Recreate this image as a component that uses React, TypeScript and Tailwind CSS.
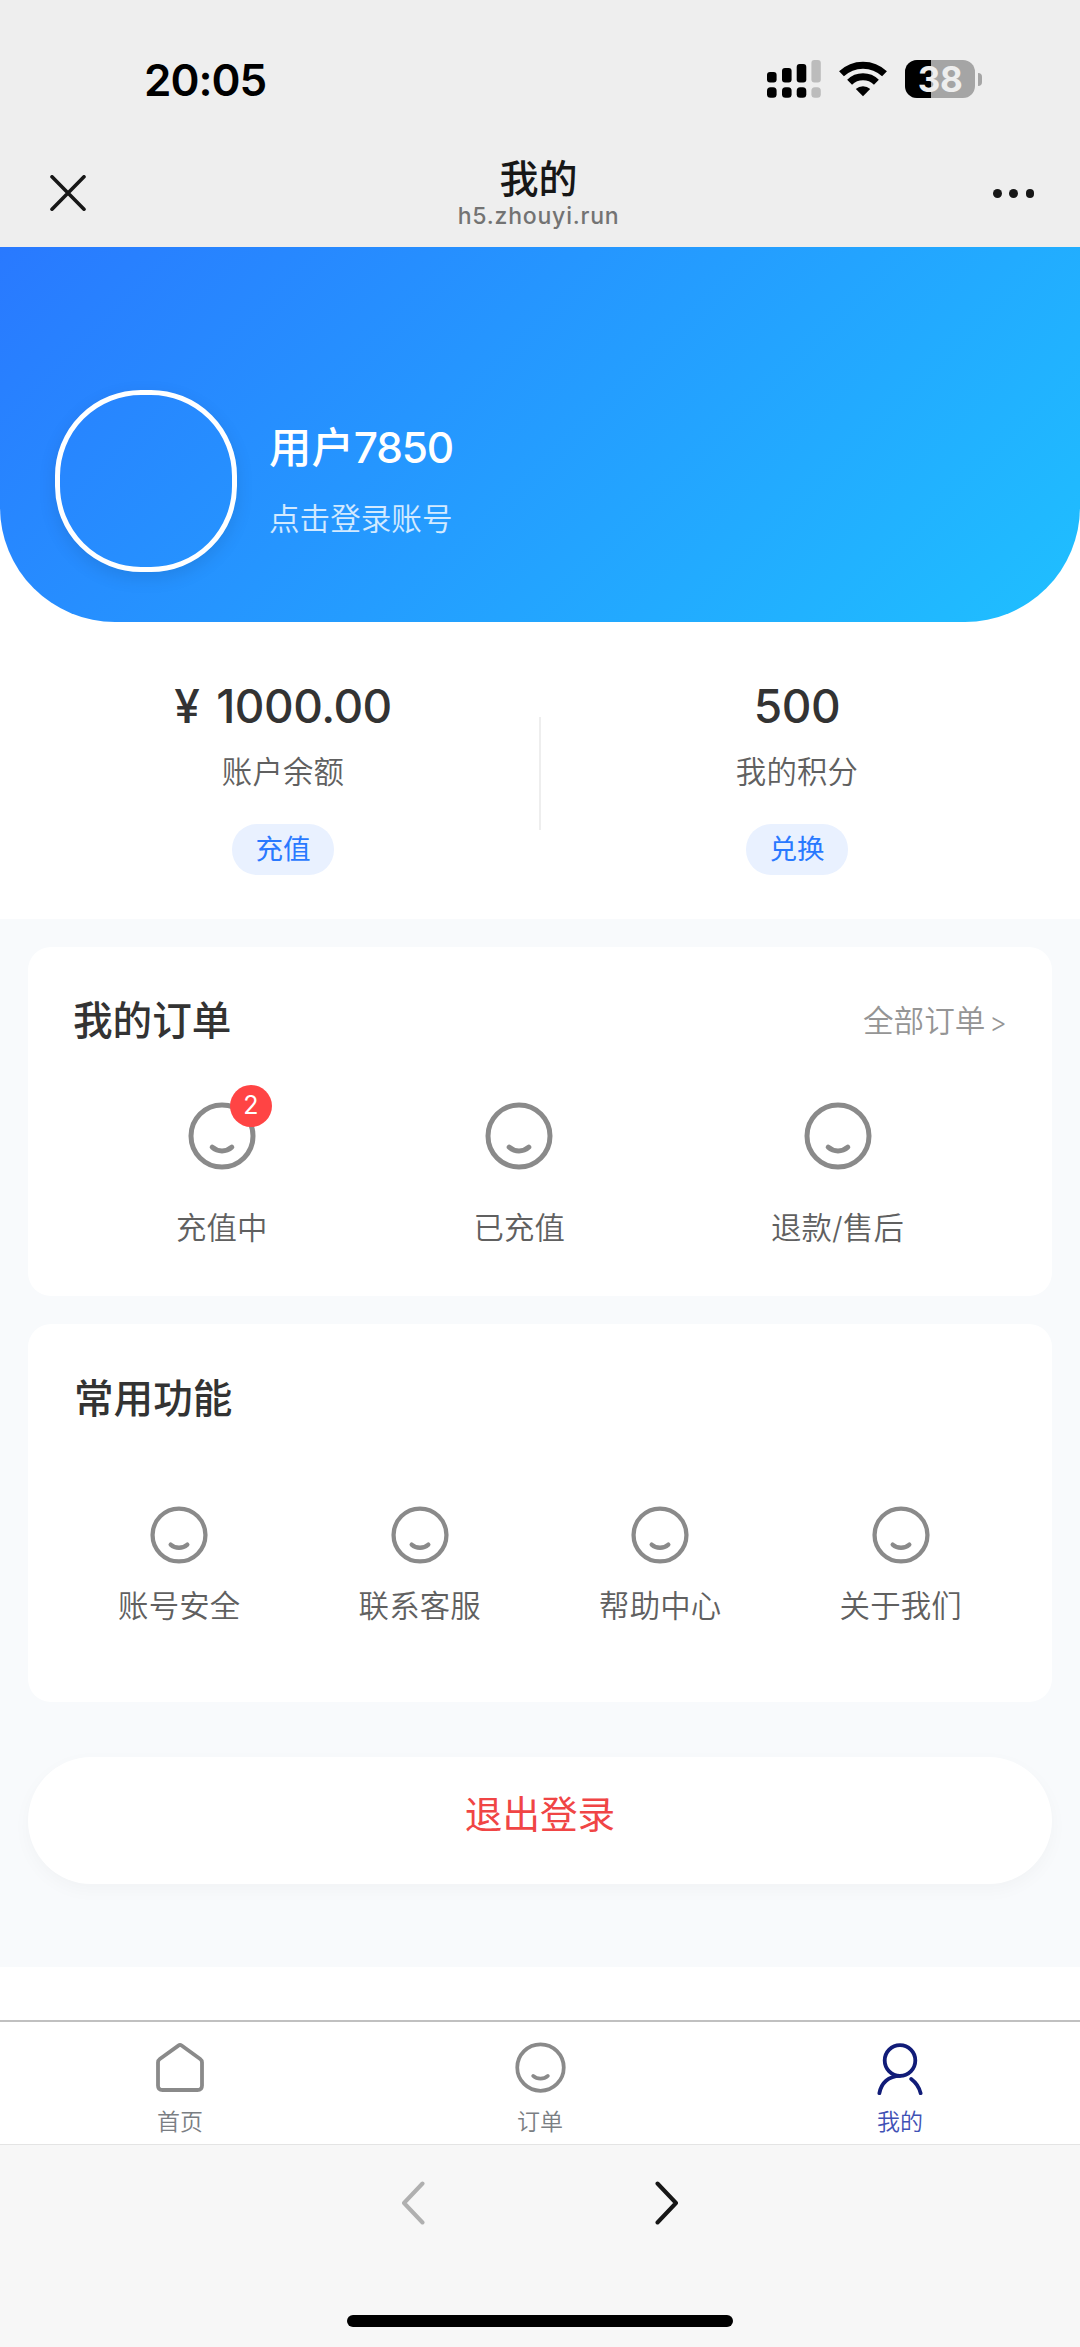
import type { ReactNode } from "react";

const orders = [
  { label: "充值中", badge: 2 },
  { label: "已充值" },
  { label: "退款/售后" },
];

const features = ["账号安全", "联系客服", "帮助中心", "关于我们"];

const labelClass = "text-[30.4px] leading-[42px] font-[350] tracking-[0.2px] text-[#606060]";

function Face({ className }: { className: string }) {
  return (
    <svg viewBox="0 0 68 68" fill="none" stroke="currentColor" strokeWidth="5" strokeLinecap="round" className={className}>
      <circle cx="34" cy="34" r="31" />
      <path d="M24.2 45.2c5.6 5 14 5 19.6 0" />
    </svg>
  );
}

function HomeIcon() {
  return (
    <svg viewBox="0 0 50 50" fill="none" stroke="currentColor" strokeWidth="3.8" strokeLinejoin="round" className="size-[50px]">
      <path d="M23.4 3.6Q25 2.4 26.6 3.6L45.2 17Q47 18.3 47 20.5V43.4Q47 48 42.4 48H7.6Q3 48 3 43.4V20.5Q3 18.3 4.8 17Z" />
    </svg>
  );
}

function UserIcon() {
  return (
    <svg viewBox="0 0 50 54" fill="none" stroke="currentColor" strokeWidth="3.8" strokeLinecap="round" className="h-[54px] w-[50px]">
      <circle cx="25" cy="19.5" r="15.3" />
      <path d="M4.4 52.2C6.2 42 13.5 35 25 34.8" />
      <path d="M36.2 38c5 3.8 8.1 8.4 9.4 14.2" />
    </svg>
  );
}

function StatusBar() {
  return (
    <div className="flex h-[158px] items-center justify-between pr-[98px] pl-[144px] text-black">
      <span className="pt-[2px] text-[44px] leading-none font-semibold tracking-[-1px]">20:05</span>
      <div className="flex items-center">
        <svg viewBox="0 0 54 38" className="h-[38px] w-[54px]">
          <g fill="#000">
            <rect x="0" y="12" width="9.6" height="10.6" rx="3" />
            <rect x="15" y="8" width="9.6" height="14.6" rx="3" />
            <rect x="29.7" y="4" width="9.6" height="18.6" rx="3" />
            <rect x="0" y="27.3" width="9.6" height="10.5" rx="3.5" />
            <rect x="15" y="27.3" width="9.6" height="10.5" rx="3.5" />
            <rect x="29.7" y="27.3" width="9.6" height="10.5" rx="3.5" />
          </g>
          <g fill="#bcbcbc">
            <rect x="44.4" y="0" width="9.4" height="22.6" rx="3" />
            <rect x="44.4" y="27.3" width="9.4" height="10.5" rx="3.5" />
          </g>
        </svg>
        <svg viewBox="0 0 48 36" fill="none" stroke="#000" className="ml-[18px] h-[36px] w-[48px]">
          <path d="M2.5 12.8a31 31 0 0 1 43 0" strokeWidth="7" />
          <path d="M10.6 21.3a19.2 19.2 0 0 1 26.8 0" strokeWidth="7" />
          <path d="M24 35.2l-7.2-7.2a10.6 10.6 0 0 1 14.4 0z" fill="#000" stroke="none" />
        </svg>
        <div className="relative ml-[18px] h-[38px] w-[70px] rounded-[12px] bg-[#a5a5a5]">
          <div className="h-full w-[26px] rounded-l-[12px] bg-black" />
          <span className="absolute -inset-y-[3px] inset-x-0 text-center text-[35px] leading-[44px] font-bold tracking-[-0.5px] text-[#eee]">
            38
          </span>
        </div>
        <div className="ml-[3px] h-[13px] w-[4px] rounded-r-full bg-[#a5a5a5]" />
      </div>
    </div>
  );
}

function NavBar() {
  return (
    <div className="flex h-[89px] items-start justify-between pr-[46px] pl-[50px] text-[#171717]">
      <svg viewBox="0 0 36 36" fill="none" stroke="currentColor" strokeWidth="3.6" strokeLinecap="round" className="mt-[17px] size-[36px]">
        <path d="M2 1.8l32 32.4M34 1.8l-32 32.4" />
      </svg>
      <div className="pr-[2px] text-center">
        <h1 className="pt-px text-[39px] leading-[40px] font-medium">我的</h1>
        <p className="pt-px text-[23px] leading-[32px] font-medium tracking-[0.8px] text-[#737373]">h5.zhouyi.run</p>
      </div>
      <div className="mt-[31px] flex gap-[7.7px]">
        <i className="size-[8.5px] rounded-full bg-current" />
        <i className="size-[8.5px] rounded-full bg-current" />
        <i className="size-[8.5px] rounded-full bg-current" />
      </div>
    </div>
  );
}

function Balance({ value, label, action }: { value: ReactNode; label: string; action: string }) {
  return (
    <div className="flex flex-1 flex-col items-center">
      <div className="text-[46px] leading-[56px] font-medium tracking-[-0.5px] text-[#333]">{value}</div>
      <div className={`mt-[17px] ${labelClass}`}>{label}</div>
      <button className="mt-[31px] h-[51px] w-[102px] rounded-[25px] bg-[#e9f1ff] text-[27.6px] leading-[51px] text-[#2979ff]">
        {action}
      </button>
    </div>
  );
}

export default function App() {
  return (
    <div className="flex h-[2347px] w-[1080px] flex-col bg-white font-[Inter,'Noto_Sans_CJK_SC',sans-serif]">
      <header className="h-[247px] bg-[#eee]">
        <StatusBar />
        <NavBar />
      </header>

      <section className="flex h-[375px] items-start rounded-b-[115px] bg-[linear-gradient(135deg,#2979ff,#1fc0ff)] pt-[143px] pl-[55px]">
        <div className="size-[182px] rounded-[86px] border-[5px] border-white shadow-[0_6px_18px_rgba(0,0,0,0.1)]" />
        <div className="ml-[32px] text-white">
          <div className="mt-[28px] flex text-[42.4px] leading-[60px] font-medium">
            用户<span className="tracking-[-1.2px]">7850</span>
          </div>
          <div className="mt-[19px] text-[30.6px] leading-[44px] font-[350] text-white/80">点击登录账号</div>
        </div>
      </section>

      <section className="flex h-[297px] px-[26px] pt-[56px]">
        <Balance value={<><span className="mr-[17px]">¥</span>1000.00</>} label="账户余额" action="充值" />
        <div className="-mx-px mt-[39px] h-[113px] w-[2px] bg-[#eee]" />
        <Balance value="500" label="我的积分" action="兑换" />
      </section>

      <main className="h-[1048px] bg-[#f8fafc] px-[28px] pt-[28px]">
        <section className="h-[349px] rounded-[23px] bg-white px-[45px] pt-[45px]">
          <div className="flex h-[58px] items-center justify-between">
            <h2 className="text-[39.6px] leading-[58px] font-medium text-[#333]">我的订单</h2>
            <span className="flex items-center text-[30.6px] leading-[44px] font-[350] text-[#959595]">
              全部订单<span className="ml-[4px] pt-[3px] text-[27px]">&gt;</span>
            </span>
          </div>
          <div className="mt-[52px] flex justify-around text-[#8a8a8a]">
            {orders.map((o) => (
              <div key={o.label} className="flex flex-col items-center">
                <div className="relative">
                  <Face className="size-[68px]" />
                  {o.badge && (
                    <span className="absolute -top-[17px] left-[42px] size-[42px] rounded-full bg-[#ff4444] text-center text-[25px] leading-[40px] text-white">
                      {o.badge}
                    </span>
                  )}
                </div>
                <span className={`mt-[37px] ${labelClass}`}>{o.label}</span>
              </div>
            ))}
          </div>
        </section>

        <section className="mt-[28px] h-[378px] rounded-[23px] bg-white px-[31px] pt-[46px]">
          <h2 className="pl-[15px] text-[39.6px] leading-[58px] font-medium text-[#333]">常用功能</h2>
          <div className="mt-[78px] grid grid-cols-4 text-[#8a8a8a]">
            {features.map((f) => (
              <div key={f} className="flex flex-col items-center">
                <Face className="size-[58px]" />
                <span className={`mt-[21px] ${labelClass}`}>{f}</span>
              </div>
            ))}
          </div>
        </section>

        <button className="mt-[55px] block h-[127px] w-full rounded-full bg-white pb-[10px] text-[37.6px] text-[#f04545] shadow-[0_6px_18px_rgba(0,0,0,0.03)]">
          退出登录
        </button>
      </main>

      <div className="h-[53px]" />

      <nav className="grid h-[124px] grid-cols-3 border-t-2 border-[#c0c0c0] text-[23px] leading-[32px] font-[350] text-[#7a7e83]">
        <a className="flex flex-col items-center pt-[20px]">
          <span className="h-[64px] text-[#8a8a8a]">
            <HomeIcon />
          </span>
          首页
        </a>
        <a className="flex flex-col items-center pt-[20px]">
          <span className="h-[64px] text-[#8a8a8a]">
            <Face className="size-[51px]" />
          </span>
          订单
        </a>
        <a className="flex flex-col items-center pt-[19px] text-[#3f51b5]">
          <span className="h-[65px] text-[#111c78]">
            <UserIcon />
          </span>
          我的
        </a>
      </nav>

      <footer className="flex h-[203px] flex-col items-center justify-between border-t border-[#e4e4e4] bg-[#f7f7f7] pt-[36px] pb-[20px]">
        <div className="flex gap-[230px]">
          <svg viewBox="0 0 24 44" fill="none" stroke="#b0b0b0" strokeWidth="4" strokeLinecap="round" strokeLinejoin="round" className="h-[44px] w-[24px]">
            <path d="M21.5 2.5L3 22l18.500 19.500" />
          </svg>
          <svg viewBox="0 0 24 44" fill="none" stroke="#171717" strokeWidth="4" strokeLinecap="round" strokeLinejoin="round" className="h-[44px] w-[24px]">
            <path d="M2.500 2.500L21 22 2.500 41.500" />
          </svg>
        </div>
        <div className="h-[12px] w-[386px] rounded-full bg-black" />
      </footer>
    </div>
  );
}
